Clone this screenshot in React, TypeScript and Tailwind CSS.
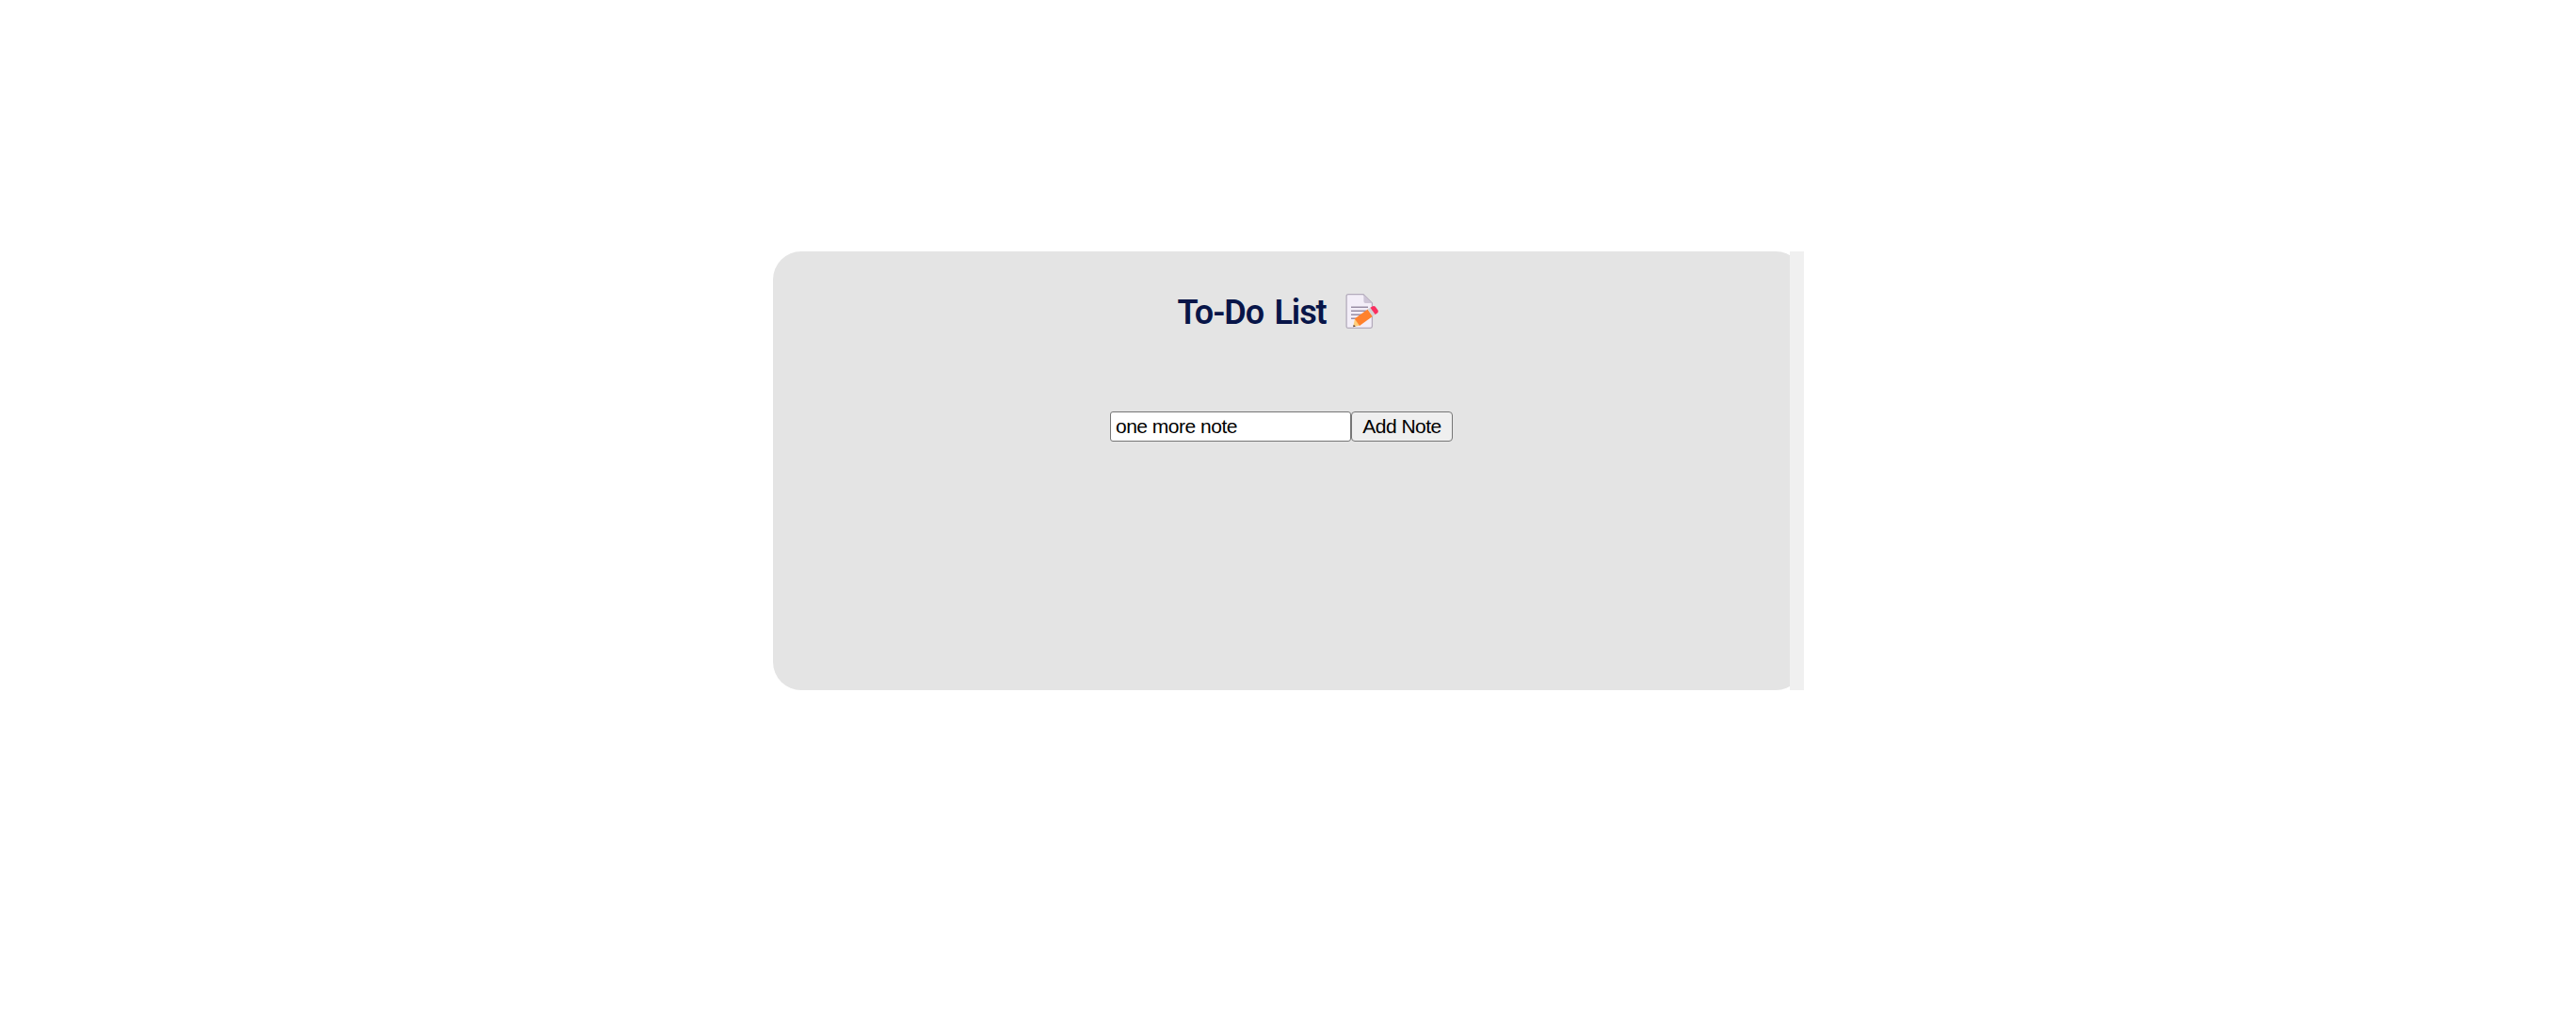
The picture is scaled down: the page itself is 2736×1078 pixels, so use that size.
function MemoIcon() {
  return (
    <svg className="mt-[45px] mr-[7px] h-[37px] w-[36px] shrink-0" viewBox="0 0 36 37" fill="none">
      <path d="M3 .7H19L28.4 10V34.5Q28.4 36.3 26.6 36.3H3Q1.1 36.3 1.1 34.5V2.6Q1.1 .7 3 .7Z" fill="#f3eef8" stroke="#b4acbc" strokeWidth="1.3" />
      <path d="M19.4 1.2L28.2 10H21.4Q19.4 10 19.4 8Z" fill="#cdc4d6" />
      <path d="M6 14.2H24M6 18.2H22M6 22.2H17M6 26.2H12" stroke="#998ea4" strokeWidth="1.5" />
      <path d="M10 26.2L8.2 35.2L15.6 33.4Z" fill="#ffce7c" />
      <path d="M8.7 32.9L8.2 35.2L10.8 34.6Z" fill="#402a32" />
      <path d="M23.6 16.6L28.8 24L15 34L9.8 26.6Z" fill="#ff822d" />
      <path d="M26.4 14.7L31.6 22L28.8 24L23.6 16.6Z" fill="#d3d3d3" />
      <path d="M26.4 14.7L29 13.2Q30.8 12.4 32 14L34.5 17.4Q35.5 19.1 34 20.4L31.6 22Z" fill="#f92f60" />
    </svg>
  );
}

export default function App() {
  return (
    <div className="flex h-[1078px] w-full items-start justify-center bg-white pt-[267px]">
      <div className="ml-px flex h-[466px] w-[1095px] overflow-hidden">
        <main className="flex grow bg-white">
          <div className="flex w-[1095px] shrink-0 flex-col items-center rounded-[30px] bg-[#e4e4e4] pr-[15px]">
            <header className="flex h-[170px] items-start">
              <h1 className="mt-[42px] h-[46px] w-[178px] whitespace-nowrap font-['Roboto'] text-[36px] leading-[46px] font-semibold tracking-[-1.05px] [word-spacing:3.5px] text-[#081548]">To-Do List</h1>
              <MemoIcon />
            </header>
            <form className="flex h-8" onSubmit={(e) => e.preventDefault()}>
              <input
                aria-label="Note"
                defaultValue="one more note"
                className="h-8 w-64 rounded-[3px] border border-[#767676] bg-white pr-1 pl-[5px] font-['Liberation_Sans'] text-[21px] tracking-[-0.5px] text-black outline-none"
              />
              <button className="h-8 w-[108px] rounded-[4px] border border-[#767676] bg-[#efefef] font-['Liberation_Sans'] text-[21px] leading-[28px] tracking-[-0.5px] text-black">Add Note</button>
            </form>
          </div>
          <div className="relative -ml-[15px] w-[15px] shrink-0 bg-[#f0f0f0]" />
        </main>
      </div>
    </div>
  );
}
